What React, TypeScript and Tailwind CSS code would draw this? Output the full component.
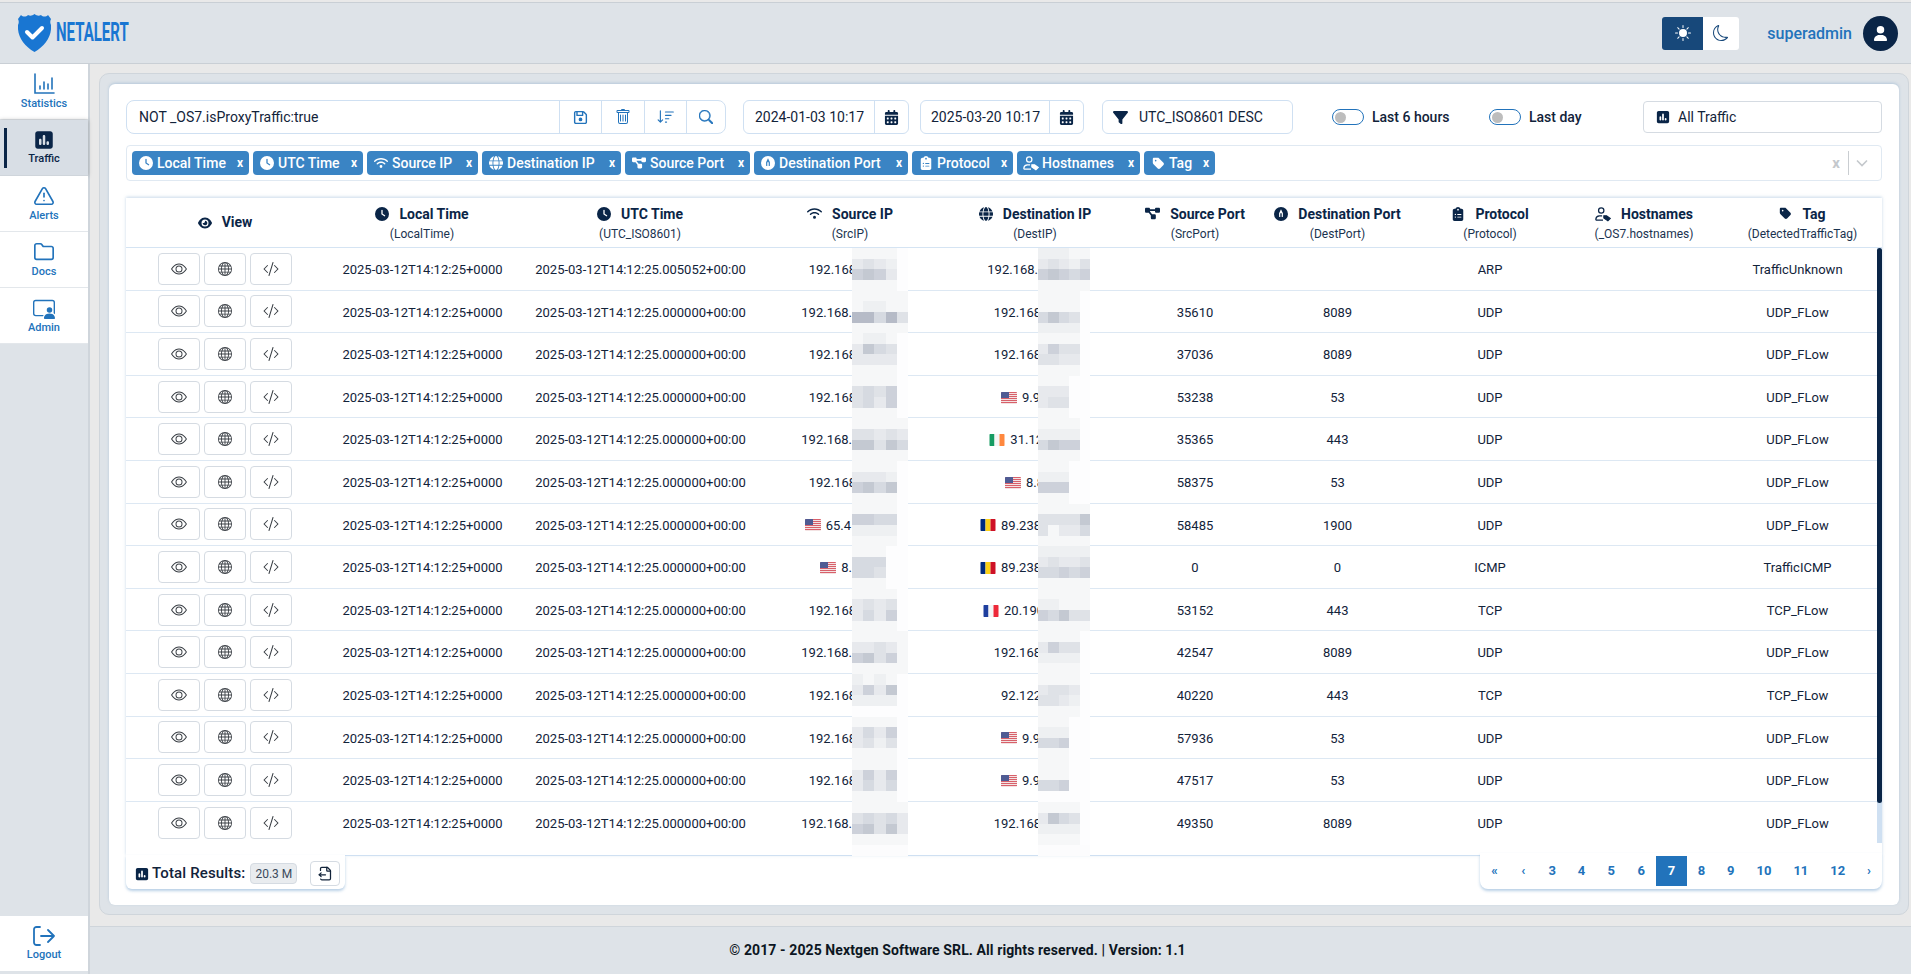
import { FileOutput, Folder, TriangleAlert } from 'lucide-react'
import {
  FaCalendarDays, FaClipboardList, FaClock, FaDiagramProject, FaEye, FaFilter, FaGlobe,
  FaRegFloppyDisk, FaSquarePollVertical, FaTag, FaUser, FaWifi,
} from 'react-icons/fa6'
import { BsCodeSlash, BsEye, BsGlobe, BsMoon, BsPersonVideo3, BsSearch, BsSortDown, BsSunFill, BsTrash } from 'react-icons/bs'
import type { ReactNode } from 'react'

type Flag = 'us' | 'ie' | 'ro' | 'fr' | null

interface Row {
  src: string
  srcFlag?: Flag
  srcPad: string
  srcBlur: string[]
  dest: string
  destFlag?: Flag
  destPad: string
  destBlur: string[]
  sport: string
  dport: string
  proto: string
  tag: string
}

const rows: Row[] = [
  { src: '192.168', srcPad: 'pr-[84px]', srcBlur: ['11110', '34320', '67630', '11110'], dest: '192.168.', destPad: 'pr-[92px]', destBlur: ['22211', '34324', '67656', '11111'], sport: '', dport: '', proto: 'ARP', tag: 'TrafficUnknown' },
  { src: '192.168.', srcPad: 'pr-[88px]', srcBlur: ['11111', '12211', '88584', '11111'], dest: '192.168', destPad: 'pr-[89px]', destBlur: ['11110', '11110', '57540', '22220'], sport: '35610', dport: '8089', proto: 'UDP', tag: 'UDP_FLow' },
  { src: '192.168', srcPad: 'pr-[84px]', srcBlur: ['12210', '37540', '33330', '11110'], dest: '192.168', destPad: 'pr-[89px]', destBlur: ['11110', '36440', '44330', '11110'], sport: '37036', dport: '8089', proto: 'UDP', tag: 'UDP_FLow' },
  { src: '192.168', srcPad: 'pr-[84px]', srcBlur: ['11110', '45460', '45360', '11110'], dest: '9.9', destFlag: 'us', destPad: 'pr-[90px]', destBlur: ['11100', '33300', '34400', '11100'], sport: '53238', dport: '53', proto: 'UDP', tag: 'UDP_FLow' },
  { src: '192.168.', srcPad: 'pr-[88px]', srcBlur: ['11111', '44343', '77475', '11111'], dest: '31.12', destFlag: 'ie', destPad: 'pr-[87px]', destBlur: ['11110', '22220', '57660', '11110'], sport: '35365', dport: '443', proto: 'UDP', tag: 'UDP_FLow' },
  { src: '192.168', srcPad: 'pr-[84px]', srcBlur: ['11110', '33320', '67570', '11110'], dest: '8.8', destFlag: 'us', destPad: 'pr-[86px]', destBlur: ['11100', '22200', '66600', '11100'], sport: '58375', dport: '53', proto: 'UDP', tag: 'UDP_FLow' },
  { src: '65.4', srcFlag: 'us', srcPad: 'pr-[89px]', srcBlur: ['11110', '66550', '22220', '11110'], dest: '89.238', destFlag: 'ro', destPad: 'pr-[89px]', destBlur: ['11111', '44447', '41335', '11111'], sport: '58485', dport: '1900', proto: 'UDP', tag: 'UDP_FLow' },
  { src: '8.', srcFlag: 'us', srcPad: 'pr-[88px]', srcBlur: ['11100', '55500', '55400', '11100'], dest: '89.238', destFlag: 'ro', destPad: 'pr-[89px]', destBlur: ['22222', '34334', '55656', '11111'], sport: '0', dport: '0', proto: 'ICMP', tag: 'TrafficICMP' },
  { src: '192.168', srcPad: 'pr-[84px]', srcBlur: ['11110', '34340', '35360', '11110'], dest: '20.190', destFlag: 'fr', destPad: 'pr-[86px]', destBlur: ['11111', '22111', '65744', '11111'], sport: '53152', dport: '443', proto: 'TCP', tag: 'TCP_FLow' },
  { src: '192.168.', srcPad: 'pr-[88px]', srcBlur: ['11111', '33431', '67461', '11111'], dest: '192.168', destPad: 'pr-[89px]', destBlur: ['11110', '36440', '22220', '11110'], sport: '42547', dport: '8089', proto: 'UDP', tag: 'UDP_FLow' },
  { src: '192.168', srcPad: 'pr-[84px]', srcBlur: ['21210', '36370', '22220', '00000'], dest: '92.122', destPad: 'pr-[89px]', destBlur: ['11110', '34430', '44320', '11110'], sport: '40220', dport: '443', proto: 'TCP', tag: 'TCP_FLow' },
  { src: '192.168', srcPad: 'pr-[84px]', srcBlur: ['11110', '35360', '34240', '11110'], dest: '9.9', destFlag: 'us', destPad: 'pr-[90px]', destBlur: ['11100', '22200', '55600', '11100'], sport: '57936', dport: '53', proto: 'UDP', tag: 'UDP_FLow' },
  { src: '192.168', srcPad: 'pr-[84px]', srcBlur: ['11110', '36360', '35350', '11110'], dest: '9.9', destFlag: 'us', destPad: 'pr-[90px]', destBlur: ['11100', '11100', '55600', '00000'], sport: '47517', dport: '53', proto: 'UDP', tag: 'UDP_FLow' },
  { src: '192.168.', srcPad: 'pr-[88px]', srcBlur: ['11111', '45453', '67473', '11111'], dest: '192.168', destPad: 'pr-[89px]', destBlur: ['11110', '37540', '22220', '11110'], sport: '49350', dport: '8089', proto: 'UDP', tag: 'UDP_FLow' },
]

const greys = [
  'bg-[#fdfdfe]', 'bg-[#f6f7f8]', 'bg-[#eef0f2]', 'bg-[#e7e9ed]', 'bg-[#dfe2e7]',
  'bg-[#d6dae1]', 'bg-[#cdd1da]', 'bg-[#c4c9d2]', 'bg-[#b6bbc7]',
]

const colClass = 'grid-cols-[198px_196px_240px_180px_190px_130px_155px_150px_158px_159px]'

function PortIcon({ size = 14, inner = '#fff', outer = 'currentColor' }: { size?: number; inner?: string; outer?: string }) {
  return (
    <svg width={size} height={size} viewBox="0 0 16 16">
      <circle cx="8" cy="8" r="8" fill={outer} />
      <path d="M8 2.500 10.200 7v4.500H5.800V7Z" fill={inner} />
      <path d="M7.200 7h1.600v6H7.200ZM4 13l1.800-3v3ZM12 13l-1.800-3v3Z" fill={outer} />
    </svg>
  )
}

function HostIcon({ size = 16 }: { size?: number }) {
  return (
    <svg width={size} height={size} viewBox="0 0 18 16" fill="none" stroke="currentColor" strokeWidth="1.4">
      <circle cx="7" cy="4" r="3" />
      <path d="M1 15v-1.500A4 4 0 0 1 5 10h3M1 15h8" />
      <path d="M10 10h3l4 3-2.500 2.500L10 12.500Z" fill="currentColor" />
    </svg>
  )
}

function FlagIcon({ flag }: { flag: Flag }) {
  if (flag === 'us') {
    return (
      <svg width="16" height="12" viewBox="0 0 16 12" className="mt-[2px] shrink-0 rounded-[1px]">
        <rect width="16" height="12" fill="#f3e3e3" />
        {[0, 2, 4, 6, 8, 10].map(y => <rect key={y} y={y} width="16" height="1" fill="#d8606a" />)}
        <rect width="8" height="6" fill="#4f5b93" />
      </svg>
    )
  }
  const bands = flag === 'ie' ? ['#169b62', '#f5f5f5', '#ff883e'] : flag === 'ro' ? ['#002b7f', '#fcd116', '#ce1126'] : ['#1f3f9e', '#f5f5f5', '#ed2939']
  return (
    <svg width="16" height="12" viewBox="0 0 15 12" className="mt-[2px] shrink-0 rounded-[1px]">
      {bands.map((c, i) => <rect key={c} x={i * 5} width="5" height="12" fill={c} />)}
    </svg>
  )
}

function Blur({ cells, side }: { cells: string[]; side: 'src' | 'dest' }) {
  return (
    <div className={`absolute top-0 z-10 grid h-[calc(100%+1px)] grid-rows-4 ${side === 'src' ? 'left-[92px] w-[56px]' : 'left-[98px] w-[52px]'}`}>
      {cells.map((line, i) => (
        <div key={i} className="grid grid-cols-5">
          {line.split('').map((d, j) => <div key={j} className={greys[Number(d)]} />)}
        </div>
      ))}
    </div>
  )
}

function SideItem({ icon, label, active }: { icon: ReactNode; label: string; active?: boolean }) {
  return (
    <div className={`relative flex h-[56px] flex-col items-center justify-center gap-[2px] border-b ${active ? 'border-[#cfd5db] bg-[#d8dee5] text-[#0a2547] shadow-[0_0_4px_rgba(0,0,0,0.25)]' : 'border-[#e3e7eb] bg-white text-[#2273bb]'}`}>
      {active && <div className="absolute left-[4px] top-[8px] h-[40px] w-[3px] bg-[#0a2547]" />}
      {icon}
      <span className="text-[11px] font-medium leading-[13px]">{label}</span>
    </div>
  )
}

function Chip({ icon, label, w }: { icon: ReactNode; label: string; w: string }) {
  return (
    <div className={`flex h-[24px] items-center rounded-[4px] bg-[#3a84c4] pl-[6px] pr-[6px] text-[14px] font-medium text-white ${w}`}>
      <span className="mr-[3px] flex w-[16px] shrink-0 justify-center">{icon}</span>
      <span className="whitespace-nowrap">{label}</span>
      <span className="ml-auto text-[12px] font-bold">x</span>
    </div>
  )
}

function Toggle({ label, w }: { label: string; w: string }) {
  return (
    <div className={`flex items-center gap-[8px] ${w}`}>
      <div className="flex h-[16px] w-[32px] items-center rounded-full border border-[#2273bb] bg-white pl-[2px]">
        <div className="h-[11px] w-[11px] rounded-full bg-[#bdbdbd]" />
      </div>
      <span className="whitespace-nowrap text-[14px] font-medium text-[#12233a]">{label}</span>
    </div>
  )
}

function Th({ icon, title, sub, gap = 'gap-[10px]' }: { icon: ReactNode; title: string; sub: string; gap?: string }) {
  return (
    <div className="flex flex-col items-center justify-center pt-[2px]">
      <div className={`flex items-center text-[14px] font-bold leading-[20px] text-[#0a2547] ${gap}`}>
        {icon}
        <span>{title}</span>
      </div>
      <span className="text-[12px] leading-[20px] text-[#1a3350]">{sub}</span>
    </div>
  )
}

function IconBtn({ children }: { children: ReactNode }) {
  return (
    <div className="flex h-[32px] w-[42px] items-center justify-center rounded-[4px] border border-[#d5dbe2] bg-white text-[#3a3f45]">
      {children}
    </div>
  )
}

const pages = [
  { t: '«', w: 'w-[29px]' }, { t: '‹', w: 'w-[29px]' }, { t: '3', w: 'w-[29px]' }, { t: '4', w: 'w-[30px]' }, { t: '5', w: 'w-[30px]' }, { t: '6', w: 'w-[30px]' },
  { t: '7', w: 'w-[31px]', on: true }, { t: '8', w: 'w-[29px]' }, { t: '9', w: 'w-[30px]' }, { t: '10', w: 'w-[37px]' }, { t: '11', w: 'w-[37px]' }, { t: '12', w: 'w-[37px]' }, { t: '›', w: 'w-[26px]' },
]

export default function App() {
  return (
    <div className="flex h-[974px] w-full flex-col overflow-hidden bg-[#e9e9e9] font-['Roboto',sans-serif] text-[13px] text-[#12233a]">
      {/* top bar */}
      <div className="mt-[2px] flex h-[62px] shrink-0 items-center border-y border-[#c9cfd5] bg-[#dee3e8]">
        <div className="flex items-center pl-[18px]">
          <svg width="33" height="38" viewBox="0 0 33 38">
            <path d="M3 1c2 2 5 2 7 0 2 1 4 1 6.500-1C19 2 21 2 23 1c2 2 5 2 7 0l3 4c-1 2-1 4 0 6 1 11-6 21-16.500 27C6 32-1 22 0 11c1-2 1-4 0-6Z" fill="#1976d2" />
            <path d="m9 18 5.500 5.500L24 14" fill="none" stroke="#fff" strokeWidth="4" strokeLinecap="round" strokeLinejoin="round" />
          </svg>
          <div className="ml-[5px] w-[72px]">
            <span className="block origin-left scale-x-[0.6] whitespace-nowrap text-[25px] font-bold leading-[30px] text-[#1976d2]">NETALERT</span>
          </div>
        </div>
        <div className="ml-auto flex items-center pr-[13px]">
          <div className="flex h-[33px] w-[41px] items-center justify-center rounded-l-[3px] bg-[#17487a] text-white"><BsSunFill size={16} /></div>
          <div className="flex h-[33px] w-[36px] items-center justify-center rounded-r-[3px] bg-white text-[#17487a]"><BsMoon size={16} /></div>
          <span className="ml-[28px] pt-[1px] text-[16px] font-medium text-[#2273bb]">superadmin</span>
          <div className="ml-[11px] flex h-[35px] w-[35px] items-center justify-center rounded-full bg-[#0a2547] text-white"><FaUser size={15} /></div>
        </div>
      </div>

      <div className="flex min-h-0 flex-1">
        {/* sidebar */}
        <div className="flex w-[90px] shrink-0 flex-col border-r-2 border-[#cfd5db] bg-[#dee3e8] pb-[3px]">
          <SideItem
            label="Statistics"
            icon={
              <svg width="21" height="22" viewBox="0 0 21 22" fill="none" stroke="currentColor" strokeWidth="1.6" strokeLinecap="round">
                <path d="M1 1v19h19M6 16v-3M10 16V9M14 16v-5M18 16V5" />
              </svg>
            }
          />
          <SideItem label="Traffic" active icon={<FaSquarePollVertical size={20} />} />
          <SideItem label="Alerts" icon={<TriangleAlert size={22} strokeWidth={1.8} />} />
          <SideItem label="Docs" icon={<Folder size={22} strokeWidth={1.8} />} />
          <SideItem label="Admin" icon={<BsPersonVideo3 size={22} />} />
          <div className="mt-auto flex h-[55px] flex-col items-center justify-center gap-[2px] bg-white text-[#2273bb]">
            <svg width="22" height="20" viewBox="0 0 22 20" fill="none" stroke="currentColor" strokeWidth="1.8" strokeLinecap="round" strokeLinejoin="round">
              <path d="M7 1H3.500A2.500 2.500 0 0 0 1 3.500v13A2.500 2.500 0 0 0 3.500 19H7M8 10h13M15 4l6 6-6 6" />
            </svg>
            <span className="text-[11px] font-medium leading-[13px]">Logout</span>
          </div>
        </div>

        <div className="flex min-w-0 flex-1 flex-col">
          <div className="pl-[9px] pr-[2px] pt-[9px]">
            <div className="h-[842px] rounded-[10px] border border-[#cfd5db] bg-[#dee3e8] px-[9px] pt-[10px]">
              {/* card */}
              <div className="flex h-[821px] flex-col rounded-[6px] bg-white px-[17px] pt-[16px] shadow-[0_-1px_3px_rgba(120,160,200,0.4)]">
                {/* toolbar */}
                <div className="flex h-[34px] shrink-0 items-center">
                  <div className="flex h-[34px] w-[600px] items-center rounded-[8px] border border-[#cfe0f2] text-[#2273bb]">
                    <span className="flex-1 pl-[12px] text-[14px] text-[#12233a]">NOT _OS7.isProxyTraffic:true</span>
                    <div className="flex h-full w-[42px] items-center justify-center border-l border-[#cfe0f2]"><FaRegFloppyDisk size={15} /></div>
                    <div className="flex h-full w-[43px] items-center justify-center border-l border-[#cfe0f2]"><BsTrash size={16} /></div>
                    <div className="flex h-full w-[42px] items-center justify-center border-l border-[#cfe0f2]"><BsSortDown size={18} /></div>
                    <div className="flex h-full w-[39px] items-center justify-center border-l border-[#cfe0f2]"><BsSearch size={14} strokeWidth={0.6} /></div>
                  </div>
                  <div className="ml-[17px] flex h-[34px] w-[166px] items-center rounded-[6px] border border-[#cfe0f2]">
                    <span className="flex-1 pl-[11px] text-[14px] text-[#12233a]">2024-01-03 10:17</span>
                    <div className="flex h-full w-[34px] items-center justify-center border-l border-[#cfe0f2] text-[#0a2547]"><FaCalendarDays size={15} /></div>
                  </div>
                  <div className="ml-[11px] flex h-[34px] w-[164px] items-center rounded-[6px] border border-[#cfe0f2]">
                    <span className="flex-1 pl-[10px] text-[14px] text-[#12233a]">2025-03-20 10:17</span>
                    <div className="flex h-full w-[34px] items-center justify-center border-l border-[#cfe0f2] text-[#0a2547]"><FaCalendarDays size={15} /></div>
                  </div>
                  <div className="ml-[18px] flex h-[34px] w-[191px] items-center rounded-[6px] border border-[#cfe0f2] pl-[10px]">
                    <FaFilter size={15} className="text-[#0a2547]" />
                    <span className="ml-[11px] text-[14px]">UTC_ISO8601 DESC</span>
                  </div>
                  <div className="ml-[39px]"><Toggle label="Last 6 hours" w="w-[157px]" /></div>
                  <Toggle label="Last day" w="w-[154px]" />
                  <div className="flex h-[32px] w-[239px] items-center rounded-[4px] border border-[#d5dbe2] pl-[12px]">
                    <FaSquarePollVertical size={14} className="text-[#0a2547]" />
                    <span className="ml-[8px] text-[14px]">All Traffic</span>
                  </div>
                </div>

                {/* column chips */}
                <div className="mt-[11px] flex h-[36px] shrink-0 items-center gap-[4px] rounded-[4px] border border-[#e0e9f2] px-[5px]">
                  <Chip w="w-[117px]" label="Local Time" icon={<FaClock size={14} />} />
                  <Chip w="w-[110px]" label="UTC Time" icon={<FaClock size={14} />} />
                  <Chip w="w-[111px]" label="Source IP" icon={<FaWifi size={14} />} />
                  <Chip w="w-[139px]" label="Destination IP" icon={<FaGlobe size={14} />} />
                  <Chip w="w-[125px]" label="Source Port" icon={<FaDiagramProject size={14} />} />
                  <Chip w="w-[154px]" label="Destination Port" icon={<PortIcon outer="#fff" inner="#3a84c4" />} />
                  <Chip w="w-[101px]" label="Protocol" icon={<FaClipboardList size={14} />} />
                  <Chip w="w-[123px]" label="Hostnames" icon={<HostIcon />} />
                  <Chip w="w-[71px]" label="Tag" icon={<FaTag size={13} />} />
                  <div className="ml-auto flex items-center pr-[7px] text-[#c4c8cc]">
                    <span className="pr-[8px] text-[15px] font-bold">x</span>
                    <div className="h-[24px] w-px bg-[#c9cdd1]" />
                    <svg width="14" height="14" viewBox="0 0 14 14" fill="none" stroke="currentColor" strokeWidth="1.6" className="ml-[6px]"><path d="m2 4.500 5 5 5-5" /></svg>
                  </div>
                </div>

                {/* table */}
                <div className="relative mt-[17px] h-[658px] shrink-0 border-b border-[#cfe0f2] shadow-[0_-1px_3px_rgba(120,160,200,0.4)]">
                  <div className={`grid h-[50px] border-b border-[#d5e4f3] ${colClass}`}>
                    <div className="flex items-center justify-center gap-[10px] text-[14px] font-bold text-[#0a2547]"><FaEye size={14} />View</div>
                    <Th icon={<FaClock size={14} />} title="Local Time" sub="(LocalTime)" />
                    <Th icon={<FaClock size={14} />} title="UTC Time" sub="(UTC_ISO8601)" />
                    <Th icon={<FaWifi size={15} />} title="Source IP" sub="(SrcIP)" />
                    <Th icon={<FaGlobe size={14} />} title="Destination IP" sub="(DestIP)" />
                    <Th icon={<FaDiagramProject size={15} />} title="Source Port" sub="(SrcPort)" />
                    <Th icon={<PortIcon />} title="Destination Port" sub="(DestPort)" />
                    <Th icon={<FaClipboardList size={14} />} title="Protocol" sub="(Protocol)" />
                    <Th icon={<HostIcon />} title="Hostnames" sub="(_OS7.hostnames)" />
                    <Th icon={<FaTag size={13} />} title="Tag" sub="(DetectedTrafficTag)" />
                  </div>
                  {rows.map((r, i) => (
                    <div key={i} className={`grid h-[42.6px] items-center text-center ${i < 13 ? 'border-b border-[#dde8f3]' : ''} ${colClass}`}>
                      <div className="flex justify-center gap-[4px]">
                        <IconBtn><BsEye size={16} /></IconBtn>
                        <IconBtn><BsGlobe size={14} /></IconBtn>
                        <IconBtn><BsCodeSlash size={16} /></IconBtn>
                      </div>
                      <div className="pl-[1px] pt-[2px]">2025-03-12T14:12:25+0000</div>
                      <div className="pl-[1px] pt-[2px]">{i === 0 ? '2025-03-12T14:12:25.005052+00:00' : '2025-03-12T14:12:25.000000+00:00'}</div>
                      <div className={`relative flex h-full items-center justify-end gap-[5px] ${r.srcPad}`}>
                        {r.srcFlag && <FlagIcon flag={r.srcFlag} />}
                        <span className="pt-[2px]">{r.src}</span>
                        <Blur cells={r.srcBlur} side="src" />
                      </div>
                      <div className={`relative flex h-full items-center justify-end gap-[5px] ${r.destPad}`}>
                        {r.destFlag && <FlagIcon flag={r.destFlag} />}
                        <span className="pt-[2px]">{r.dest}</span>
                        <Blur cells={r.destBlur} side="dest" />
                      </div>
                      <div className="pt-[2px]">{r.sport}</div>
                      <div className="pt-[2px]">{r.dport}</div>
                      <div className="pt-[2px]">{r.proto}</div>
                      <div />
                      <div className="pr-[10px] pt-[2px]">{r.tag}</div>
                    </div>
                  ))}
                  {/* blur trails below the last row */}
                  <div className={`grid h-[12px] ${colClass}`}>
                    <div className="col-start-4 ml-[92px] w-[56px] bg-[#fcfcfd]" />
                    <div className="col-start-5 ml-[98px] w-[52px] bg-[#fcfcfd]" />
                  </div>
                  {/* scrollbar */}
                  <div className="absolute right-0 top-[50px] h-[595px] w-[5px] bg-[#cfe0f2]">
                    <div className="h-[555px] rounded-full bg-[#0a2547]" />
                  </div>
                </div>

                {/* table footer */}
                <div className="-mt-[3px] flex shrink-0 items-start justify-between">
                  <div className="relative z-20 mt-[2px] flex h-[34px] w-[219px] items-center rounded-b-[6px] bg-white pl-[9px] pt-[3px] shadow-[0_2px_3px_rgba(100,150,200,0.45)]">
                    <FaSquarePollVertical size={14} className="text-[#0a2547]" />
                    <span className="ml-[3px] text-[15px] font-medium tracking-[0.15px]">Total Results:</span>
                    <span className="ml-[5px] flex h-[21px] w-[47px] items-center justify-center rounded-[4px] border border-[#d5dbe2] bg-[#e9ecef] text-[12px] text-[#3a4a5c]">20.3 M</span>
                    <div className="ml-[13px] flex h-[25px] w-[30px] items-center justify-center rounded-[4px] border border-[#d5dbe2] text-[#12233a]"><FileOutput size={15} /></div>
                  </div>
                  <div className="relative z-20 flex h-[36px] w-[402px] items-start rounded-b-[8px] bg-white pt-[3px] shadow-[0_2px_3px_rgba(100,150,200,0.45)]">
                    {pages.map(p => (
                      <div key={p.t} className={`flex h-[30px] items-center justify-center text-[13px] font-bold ${p.w} ${p.on ? 'bg-[#2273bb] text-white' : 'text-[#2273bb]'}`}>{p.t}</div>
                    ))}
                  </div>
                </div>
              </div>
            </div>
          </div>
          {/* footer */}
          <div className="mt-[11px] flex h-[48px] flex-1 items-center justify-center border-t border-[#cfd5db] bg-[#dee3e8] pr-[86px] text-[14px] font-bold tracking-[0.1px] text-[#0c1622]">
            © 2017 - 2025 Nextgen Software SRL. All rights reserved. | Version: 1.1
          </div>
        </div>
      </div>
    </div>
  )
}
